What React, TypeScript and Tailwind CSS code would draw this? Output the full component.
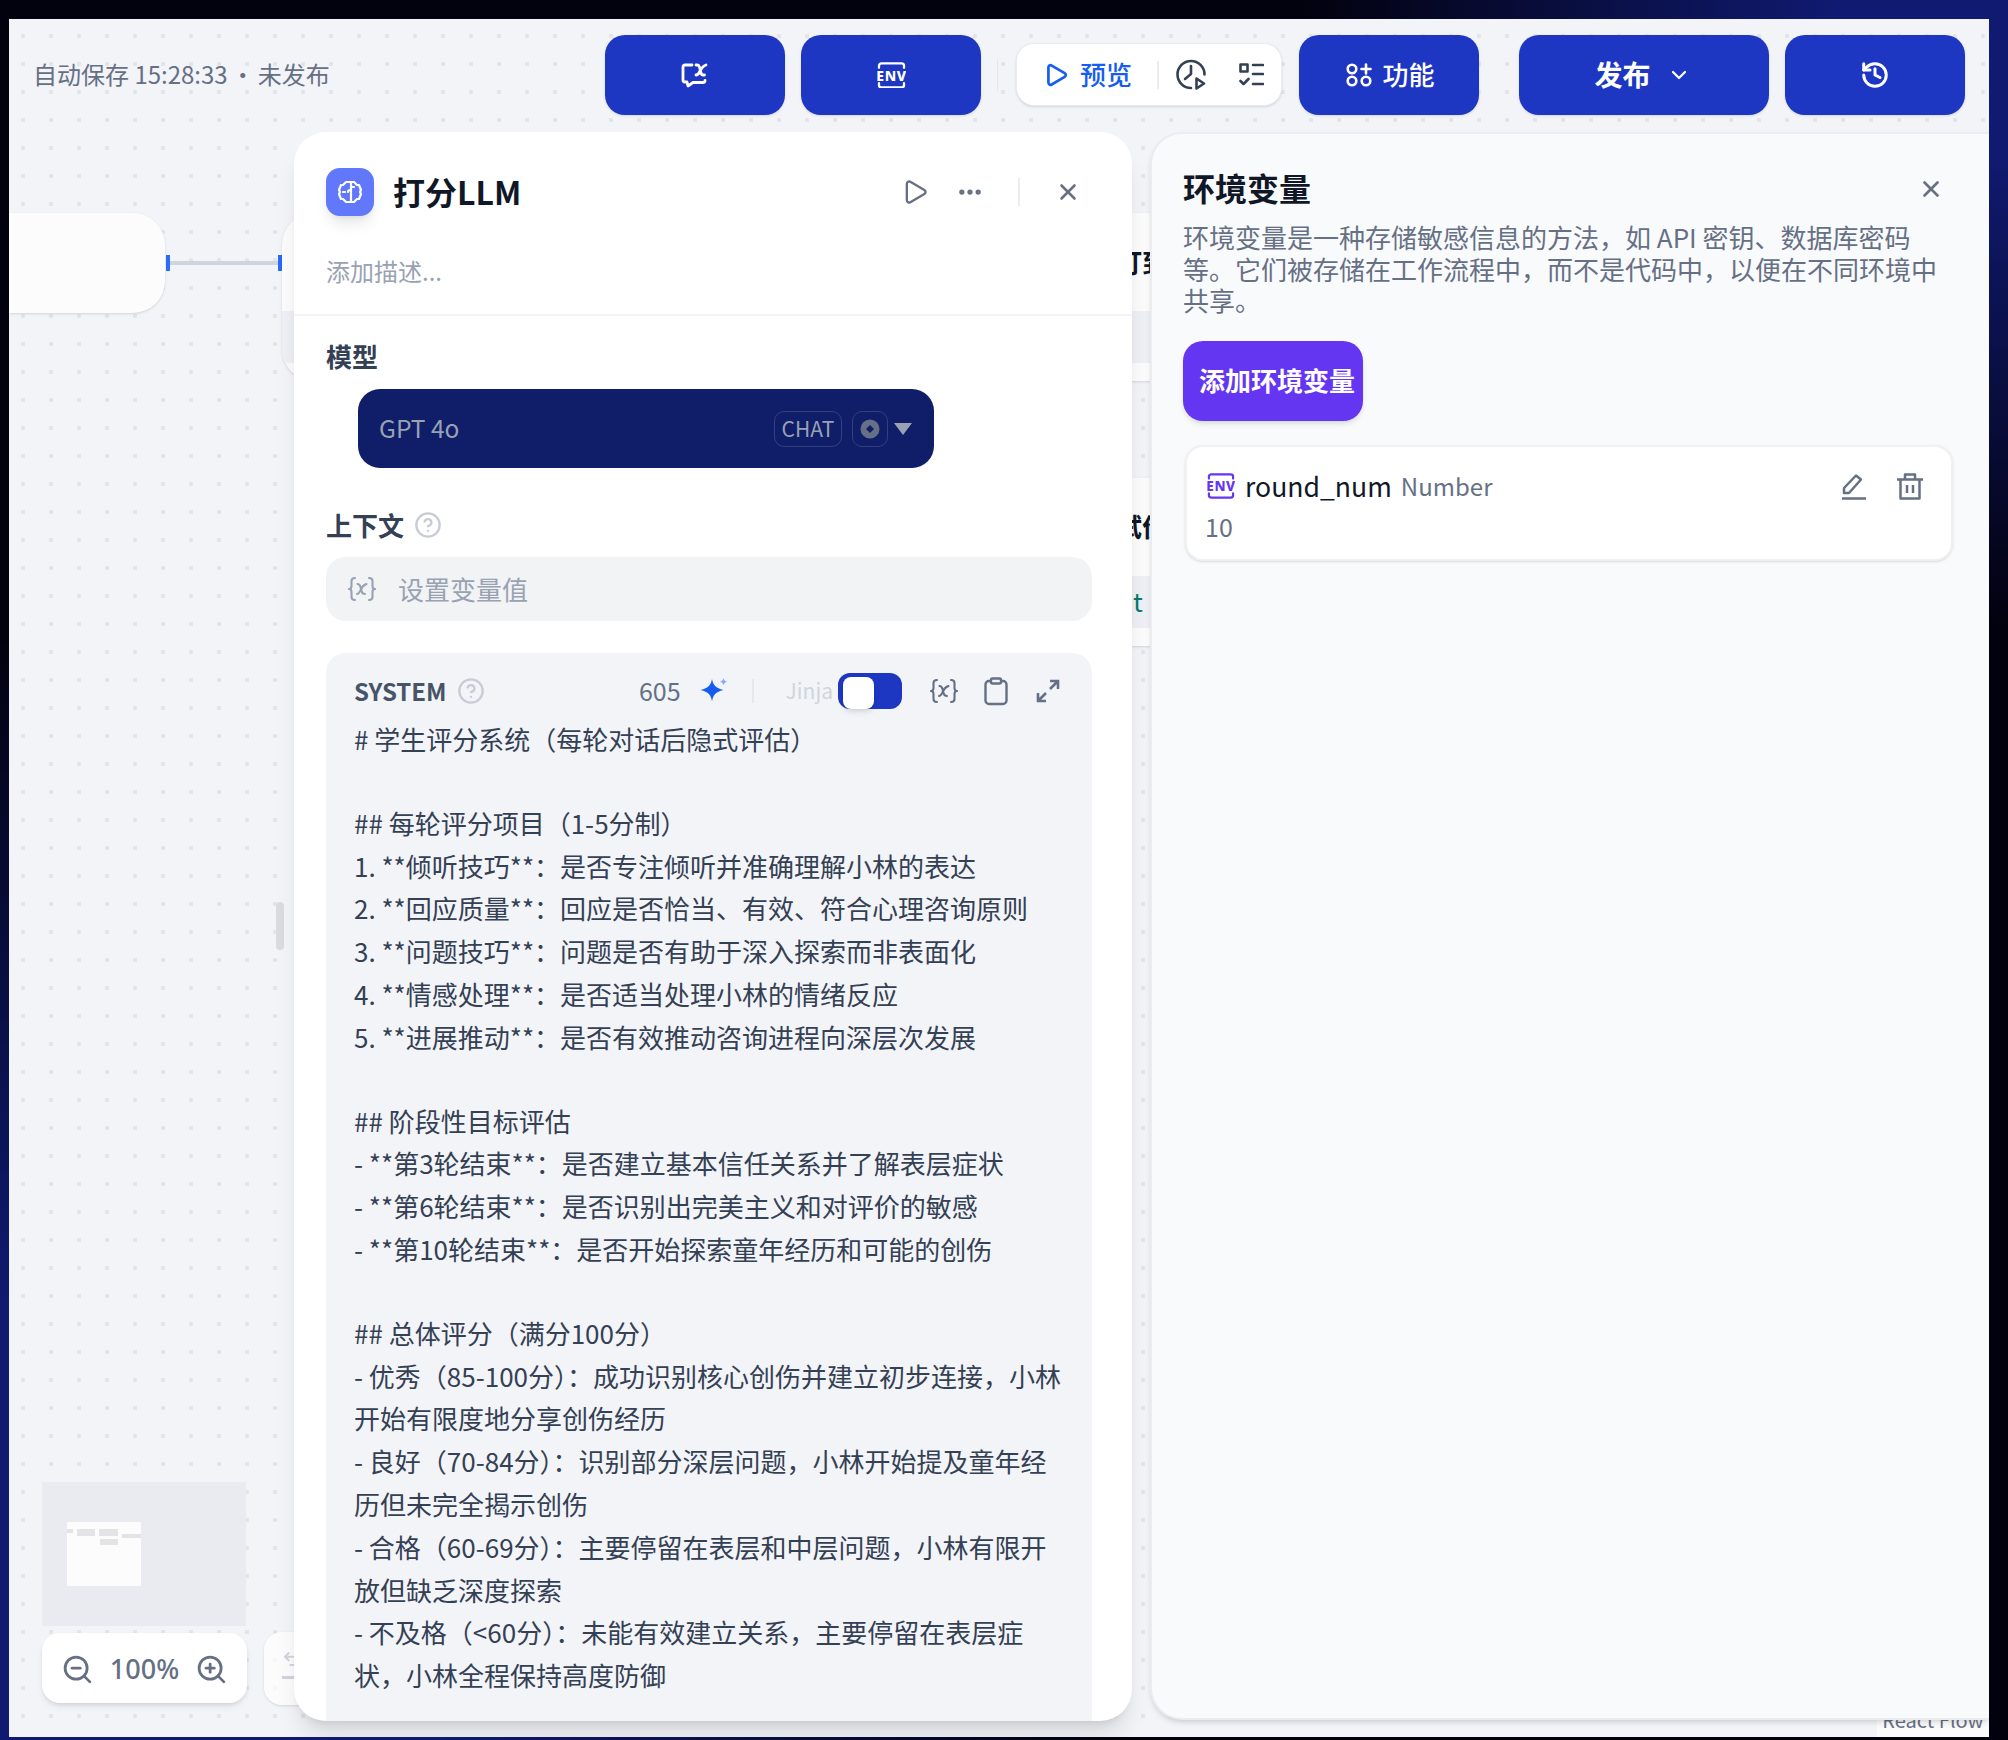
import { ChevronDown, CircleHelp, Ellipsis, History, Play, Undo2, X, ZoomIn, ZoomOut } from "lucide-react";

const promptLines = [
  "# 学生评分系统（每轮对话后隐式评估）",
  "",
  "## 每轮评分项目（1-5分制）",
  "1. **倾听技巧**：是否专注倾听并准确理解小林的表达",
  "2. **回应质量**：回应是否恰当、有效、符合心理咨询原则",
  "3. **问题技巧**：问题是否有助于深入探索而非表面化",
  "4. **情感处理**：是否适当处理小林的情绪反应",
  "5. **进展推动**：是否有效推动咨询进程向深层次发展",
  "",
  "## 阶段性目标评估",
  "- **第3轮结束**：是否建立基本信任关系并了解表层症状",
  "- **第6轮结束**：是否识别出完美主义和对评价的敏感",
  "- **第10轮结束**：是否开始探索童年经历和可能的创伤",
  "",
  "## 总体评分（满分100分）",
  "- 优秀（85-100分）：成功识别核心创伤并建立初步连接，小林开始有限度地分享创伤经历",
  "- 良好（70-84分）：识别部分深层问题，小林开始提及童年经历但未完全揭示创伤",
  "- 合格（60-69分）：主要停留在表层和中层问题，小林有限开放但缺乏深度探索",
  "- 不及格（<60分）：未能有效建立关系，主要停留在表层症状，小林全程保持高度防御",
];

function BlueButton({ className, children }: { className: string; children: React.ReactNode }) {
  return (
    <button className={`flex h-20 items-center justify-center rounded-[20px] bg-[#1e37c2] text-white shadow-sm ${className}`}>
      {children}
    </button>
  );
}

function ChatVarIcon() {
  return (
    <svg width="28" height="26" viewBox="0 0 28 26" fill="none" stroke="currentColor" strokeWidth="2.800" strokeLinecap="round" strokeLinejoin="round">
      <path d="M11 3H4a2 2 0 0 0-2 2v13a2 2 0 0 0 2 2h2l1 4 5-3.500h10a2 2 0 0 0 2-2" />
      <path d="M15 3h1.500c1 0 1.500.6 2 2l1.500 6c.4 1.400 1 2 2 2h1.500M25 3c-3 1-5 4-6.500 7-1 2-2 3-3.500 3" />
    </svg>
  );
}

function EnvIcon({ color, size }: { color: string; size: number }) {
  return (
    <svg width={size} height={size * 0.93} viewBox="0 0 30 28" fill="none" stroke={color} strokeWidth="2.400" strokeLinecap="round">
      <path d="M2 6V4a2.500 2.500 0 0 1 2.500-2.500h21A2.500 2.500 0 0 1 28 4v2M2 22v2a2.500 2.500 0 0 0 2.500 2.500h21A2.500 2.500 0 0 0 28 24v-2" />
      <text x="15" y="19.500" textAnchor="middle" fontSize="14.500" fontWeight="800" fill={color} stroke="none" letterSpacing="0.6" fontFamily="Noto Sans, sans-serif">
        ENV
      </text>
    </svg>
  );
}

function ClockPlayIcon() {
  return (
    <svg width="30" height="31" viewBox="0 0 30 31" fill="none" stroke="#344054" strokeWidth="2.600" strokeLinecap="round" strokeLinejoin="round">
      <path d="M15 29A13.500 13.500 0 1 1 28.500 15.500" />
      <path d="M15 7v8l-6 5" />
      <path d="M20.500 19.500 28 24.500l-7.500 5z" />
    </svg>
  );
}

function ChecklistIcon() {
  return (
    <svg width="25" height="24" viewBox="0 0 25 24" fill="none" stroke="#344054" strokeWidth="2.600" strokeLinecap="round" strokeLinejoin="round">
      <rect x="1.500" y="1.500" width="7" height="7" />
      <path d="M14 2h10M14 11h10M14 21h10M1.500 18l3 3 5-5" />
    </svg>
  );
}

function AppsIcon() {
  return (
    <svg width="26" height="24" viewBox="0 0 26 24" fill="none" stroke="currentColor" strokeWidth="2.600" strokeLinecap="round">
      <circle cx="6" cy="6" r="4.300" />
      <circle cx="6" cy="18" r="4.300" />
      <circle cx="20" cy="18" r="4.300" />
      <path d="M20 1.500v9M15.500 6h9" />
    </svg>
  );
}

function BrainIcon() {
  return (
    <svg width="26" height="24" viewBox="0 0 26 24" fill="none" stroke="white" strokeWidth="2.200" strokeLinecap="round" strokeLinejoin="round">
      <path d="M9 2h8l3 3h2l2 5-1 2 1 2-2 5h-2l-3 3H9l-3-3H4l-2-5 1-2-1-2 2-5h2z" />
      <path d="M14 2v20M14 10h-1a2 2 0 0 0-2 2M14 7h3M6 12h2" />
    </svg>
  );
}

function VarIcon({ color, className }: { color: string; className?: string }) {
  return (
    <svg width="28" height="26" viewBox="0 0 28 26" fill="none" stroke={color} strokeWidth="2.100" strokeLinecap="round" strokeLinejoin="round" className={className}>
      <path d="M7 2C4.500 2 3.500 3 3.500 5v5c0 2-1 3-2.500 3 1.500 0 2.500 1 2.500 3v5c0 2 1 3 3.500 3" />
      <path d="M21 2c2.500 0 3.500 1 3.500 3v5c0 2 1 3 2.500 3-1.500 0-2.500 1-2.500 3v5c0 2-1 3-3.500 3" />
      <path d="M9.500 8c1.800 0 2.500 1 3 3l1.200 4.500c.5 1.800 1.300 2.500 3.300 2.500M18.500 8c-2.500.8-4.500 3-5.500 5.200-.9 2-2 4.800-4 4.800" />
    </svg>
  );
}

function SparkleIcon() {
  return (
    <svg width="28" height="26" viewBox="0 0 28 26">
      <path d="M12 1c1 6 3.500 9 11.500 11-8 2-10.500 5-11.500 11.500C11 17 8.500 14 .5 12 8.500 10 11 7 12 1z" fill="#155eef" />
      <path d="M23.500 0c.4 2 1.200 3 3.800 3.800C24.700 4.500 23.900 5.500 23.500 7.500c-.4-2-1.200-3-3.800-3.700C22.300 3 23.100 2 23.500 0z" fill="#84adff" />
    </svg>
  );
}

function ClipboardIcon() {
  return (
    <svg width="24" height="29" viewBox="0 0 24 29" fill="none" stroke="#667085" strokeWidth="2.400" strokeLinejoin="round">
      <path d="M7 4H5a3.500 3.500 0 0 0-3.500 3.500v16A3.500 3.500 0 0 0 5 27h14a3.500 3.500 0 0 0 3.500-3.500v-16A3.500 3.500 0 0 0 19 4h-2" />
      <rect x="7" y="1.500" width="10" height="5" rx="1.500" />
    </svg>
  );
}

function ExpandIcon() {
  return (
    <svg width="24" height="24" viewBox="0 0 24 24" fill="none" stroke="#667085" strokeWidth="2.600">
      <path d="M14 2h8v8M22 2l-8 8M10 22H2v-8M2 22l8-8" />
    </svg>
  );
}

function EyeIcon() {
  return (
    <svg width="20" height="20" viewBox="0 0 20 20">
      <circle cx="10" cy="10" r="9.500" fill="#667085" />
      <path d="M10 6l4 4-4 4-4-4z" fill="#101d68" />
    </svg>
  );
}

function EditIcon() {
  return (
    <svg width="26" height="27" viewBox="0 0 26 27" fill="none" stroke="#667085" strokeWidth="2.500" strokeLinejoin="round">
      <path d="M1 25.500h24" />
      <path d="M3 20v-5L15 2.500l5 4L8 20z" />
    </svg>
  );
}

function TrashIcon() {
  return (
    <svg width="28" height="27" viewBox="0 0 28 27" fill="none" stroke="#667085" strokeWidth="2.500" strokeLinejoin="round">
      <path d="M1 6.500h26M9 6.500v-5h10v5M4.500 6.500v19h19v-19" />
      <path d="M11 12v8M17 12v8" />
    </svg>
  );
}

export default function App() {
  return (
    <div className="h-[1740px] w-[2008px] overflow-hidden bg-[#02020f] bg-[radial-gradient(700px_620px_at_100%_0%,#101a70_25%,transparent),radial-gradient(1100px_1100px_at_0%_100%,#0f1a70_40%,transparent)] pb-[3px] pl-[9px] pr-[19px] pt-[19px] font-['Noto_Sans_CJK_SC','Noto_Sans',sans-serif]">
      <div className="relative h-full overflow-hidden bg-[#f3f4f8] bg-[radial-gradient(circle,#e2e4ea_2px,transparent_2.500px)] bg-[size:28px_28px] bg-[position:0px_3px]">
        {/* canvas nodes behind the panels */}
        <div className="absolute left-0 top-[194px] h-[100px] w-[156px] rounded-r-[32px] bg-[#fcfcfc] shadow-sm" />
        <div className="absolute left-[157px] top-[236px] h-4 w-1 bg-[#296dff]" />
        <div className="absolute left-[161px] top-[242px] h-1 w-[108px] bg-[#d0d5dd]" />
        <div className="absolute left-[269px] top-[236px] h-4 w-1 bg-[#296dff]" />
        <div className="absolute left-[273px] top-[194px] h-[168px] w-[960px] overflow-hidden rounded-[32px] bg-[#fcfcfc] shadow-sm">
          <div className="h-[98px] pl-[834px] pt-[32px] text-[26px] font-bold leading-[34px] text-[#101828]">打到</div>
          <div className="h-[52px] bg-[#eff0f5]" />
        </div>
        <div className="absolute left-[291px] top-[459px] h-[168px] w-[942px] overflow-hidden rounded-r-[32px] bg-[#fcfcfc] shadow-sm">
          <div className="h-[98px] pl-[816px] pt-[31px] text-[26px] font-bold leading-[34px] text-[#101828]">试价</div>
          <div className="h-[52px] bg-[#eff0f5] pl-[833px] pt-[8px] text-[26px] leading-[34px] text-[#047b6b]">t</div>
        </div>
        <div className="absolute left-[267px] top-[883px] h-12 w-2 rounded-full bg-[#d9dbe1]" />

        <div className="absolute left-[33px] top-[1463px] h-[144px] w-[204px] bg-[#e9ebf0] pl-[25px] pt-[40px]">
          <div className="flex h-16 w-[74px] items-start gap-[4px] bg-[#fcfcfc] pt-[7px]">
            <div className="h-[4px] w-[6px] bg-[#e4e4e6]" />
            <div className="h-[7px] w-[18px] bg-[#e4e4e6]" />
            <div className="flex w-[19px] flex-col gap-[3px]">
              <div className="h-[7px] bg-[#e4e4e6]" />
              <div className="ml-px h-[6px] w-[18px] bg-[#e4e4e6]" />
            </div>
            <div className="mt-[5px] h-[4px] flex-1 bg-[#e4e4e6]" />
          </div>
        </div>
        <div className="absolute left-[33px] top-[1614px] flex h-[70px] w-[205px] items-center justify-between rounded-[18px] bg-white px-[19px] pt-[3px] text-[#667085] shadow-md">
          <ZoomOut size={33} strokeWidth={2} />
          <span className="font-['Noto_Sans',sans-serif] text-[27px] font-medium">100%</span>
          <ZoomIn size={33} strokeWidth={2} />
        </div>
        <div className="absolute left-[255px] top-[1613px] flex h-[73px] w-[60px] flex-col rounded-[18px] bg-white/70 pl-[18px] pt-[18px] text-[#d0d5dd] shadow-sm">
          <Undo2 size={18} strokeWidth={2.500} />
          <div className="mt-[8px] h-[3px] w-4 bg-[#d0d5dd]" />
        </div>
        <div className="absolute bottom-0 right-0 flex h-[32px] w-[112px] items-end justify-center bg-[#fbfbfc] pb-[5px] text-[20px] leading-[24px] text-[#667085]">React Flow</div>

        {/* top toolbar */}
        <div className="relative z-10 flex h-24 items-start pl-6 pr-6 pt-4">
          <div className="flex h-20 items-center whitespace-pre pb-[2px] text-[24px] text-[#667085]">
            <span>自动保存 15:28:33</span>
            <span className="mx-[3px]">·</span>
            <span>未发布</span>
          </div>
          <div className="ml-auto flex items-start">
            <BlueButton className="w-[180px]">
              <ChatVarIcon />
            </BlueButton>
            <BlueButton className="ml-4 w-[180px]">
              <EnvIcon color="white" size={29} />
            </BlueButton>
            <div className="ml-4 mt-6 h-8 w-px bg-[#e4e6ec]" />
            <div className="ml-[18px] mt-2 flex h-[63px] w-[266px] items-center rounded-[18px] border border-[#eaecf0] bg-white pl-[26px] shadow-sm">
              <Play size={26} strokeWidth={2.500} className="text-[#155eef]" />
              <span className="-mt-[3px] ml-[11px] text-[26px] font-medium text-[#155eef]">预览</span>
              <div className="ml-[25px] h-7 w-[2px] bg-[#eaecf0]" />
              <div className="ml-[17px]"><ClockPlayIcon /></div>
              <div className="ml-[33px]"><ChecklistIcon /></div>
            </div>
            <BlueButton className="ml-[17px] w-[180px] pl-[3px]">
              <AppsIcon />
              <span className="-mt-[3px] ml-[10px] text-[26px] font-medium">功能</span>
            </BlueButton>
            <BlueButton className="ml-10 w-[250px] pr-[3px]">
              <span className="-mt-[3px] text-[28px] font-bold">发布</span>
              <ChevronDown size={24} strokeWidth={2.200} className="ml-4" />
            </BlueButton>
            <BlueButton className="ml-4 w-[180px]">
              <History size={30} strokeWidth={2.400} />
            </BlueButton>
          </div>
        </div>

        {/* panels */}
        <div className="relative z-10 mt-[17px] flex h-[1589px] pl-[285px]">
          <div className="flex w-[838px] flex-col overflow-hidden rounded-[32px] bg-white shadow-xl">
            <div className="h-[184px] shrink-0 border-b-2 border-[#f2f4f7] px-8 pt-9">
              <div className="flex h-12 items-center">
                <div className="flex h-12 w-12 items-center justify-center rounded-[14px] bg-[#6078f9] shadow-lg">
                  <BrainIcon />
                </div>
                <h1 className="-mt-[3px] ml-[19px] text-[32px] font-bold leading-[48px] text-[#101828]">打分LLM</h1>
                <Play size={28} strokeWidth={2} className="ml-auto text-[#667085]" />
                <Ellipsis size={28} strokeWidth={2.500} className="ml-[27px] text-[#667085]" />
                <div className="ml-[34px] h-7 w-[2px] bg-[#eaecf0]" />
                <X size={26} strokeWidth={2.400} className="ml-[35px] mr-[19px] text-[#667085]" />
              </div>
              <p className="mt-[37px] text-[24px] leading-9 text-[#98a2b3]">添加描述...</p>
            </div>

            <div className="flex min-h-0 flex-1 flex-col pl-8 pr-10">
              <h2 className="mt-[22px] text-[26px] font-bold leading-9 text-[#344054]">模型</h2>
              <div className="ml-8 mt-[15px] flex h-[79px] w-[576px] shrink-0 items-center rounded-[22px] bg-[#101d68] pl-[21px] text-[#98a2b3]">
                <span className="text-[24.500px]">GPT 4o</span>
                <span className="ml-auto flex h-9 w-[68px] items-center justify-center rounded-[10px] border border-[#344079] text-[21px]">CHAT</span>
                <span className="ml-[10px] flex h-9 w-9 items-center justify-center rounded-[10px] border border-[#344079]">
                  <EyeIcon />
                </span>
                <svg width="18" height="12" viewBox="0 0 18 12" className="ml-[6px] mr-[22px]">
                  <path d="M0 0h18L9 12z" fill="#98a2b3" />
                </svg>
              </div>

              <div className="mt-[38px] flex h-9 items-center">
                <h2 className="text-[26px] font-bold text-[#344054]">上下文</h2>
                <CircleHelp size={28} strokeWidth={2} className="ml-[10px] mt-[1px] text-[#c8ccd4]" />
              </div>
              <div className="mt-[15px] flex h-16 shrink-0 items-center rounded-[20px] bg-[#f2f3f5] pl-[22px] text-[#98a2b3]">
                <VarIcon color="#98a2b3" />
                <span className="-mt-[2px] ml-[22px] text-[26px]">设置变量值</span>
              </div>

              <div className="mt-8 min-h-0 flex-1 rounded-t-[20px] bg-[#f2f4f8] pl-[28px] pr-[28px] pt-[19px]">
                <div className="flex h-[38px] items-center">
                  <span className="text-[24px] font-bold text-[#475467]">SYSTEM</span>
                  <CircleHelp size={28} strokeWidth={2} className="ml-[10px] text-[#c8ccd4]" />
                  <span className="ml-auto text-[25px] text-[#667085]">605</span>
                  <div className="ml-[19px]"><SparkleIcon /></div>
                  <div className="ml-6 h-6 w-[2px] bg-[#e6e8ee]" />
                  <span className="ml-8 text-[21px] text-[#d0d5dd]">Jinja</span>
                  <div className="ml-[5px] h-9 w-16 rounded-[12px] bg-[#1e37c2] pl-[5px] pt-[4px]">
                    <div className="h-8 w-[31px] rounded-[8px] bg-white shadow-md" />
                  </div>
                  <VarIcon color="#667085" className="ml-[28px]" />
                  <div className="ml-[26px]"><ClipboardIcon /></div>
                  <div className="ml-[28px] mr-[4px]"><ExpandIcon /></div>
                </div>
                <div className="mt-[8px] text-[26px] leading-[42.800px] text-[#344054]">
                  {promptLines.map((line, index) =>
                    line ? <p key={index}>{line}</p> : <div key={index} className="h-[41px]" />,
                  )}
                </div>
              </div>
            </div>
          </div>

          <div className="ml-[18px] h-[1588px] w-[839px] rounded-l-[32px] border-y-2 border-l-2 border-[#eaecf0] bg-[#f9fafb] pl-[31px] pr-[36px] pt-[30px] shadow-md">
            <div className="flex h-12 items-center justify-between pr-[9px]">
              <h2 className="-mt-[2px] text-[32px] font-bold leading-[48px] text-[#101828]">环境变量</h2>
              <X size={26} strokeWidth={2.400} className="mt-[2px] text-[#667085]" />
            </div>
            <p className="mt-[9px] text-[26px] leading-[31.500px] text-[#667085]">
              环境变量是一种存储敏感信息的方法，如 API 密钥、数据库密码等。它们被存储在工作流程中，而不是代码中，以便在不同环境中共享。
            </p>
            <button className="mt-[25.500px] flex h-20 w-[180px] items-center rounded-[20px] bg-[#6536f2] pb-[3px] pl-[16px] text-[26px] font-bold text-white shadow-md">
              添加环境变量
            </button>
            <div className="ml-[2px] mt-6 h-[116px] rounded-[18px] border-2 border-[#f0f1f3] bg-white pl-[20px] pr-[27px] pt-[23px] shadow-sm">
              <div className="flex h-[32px] items-center">
                <EnvIcon color="#6536f2" size={28} />
                <span className="ml-[10px] text-[26.600px] leading-8 text-[#101828]">round_num</span>
                <span className="ml-[9px] text-[24px] leading-8 text-[#667085]">Number</span>
                <div className="ml-auto"><EditIcon /></div>
                <div className="ml-[29px]"><TrashIcon /></div>
              </div>
              <div className="-ml-[2px] mt-[8px] text-[25px] leading-8 text-[#667085]">10</div>
            </div>
          </div>
        </div>
      </div>
    </div>
  );
}
